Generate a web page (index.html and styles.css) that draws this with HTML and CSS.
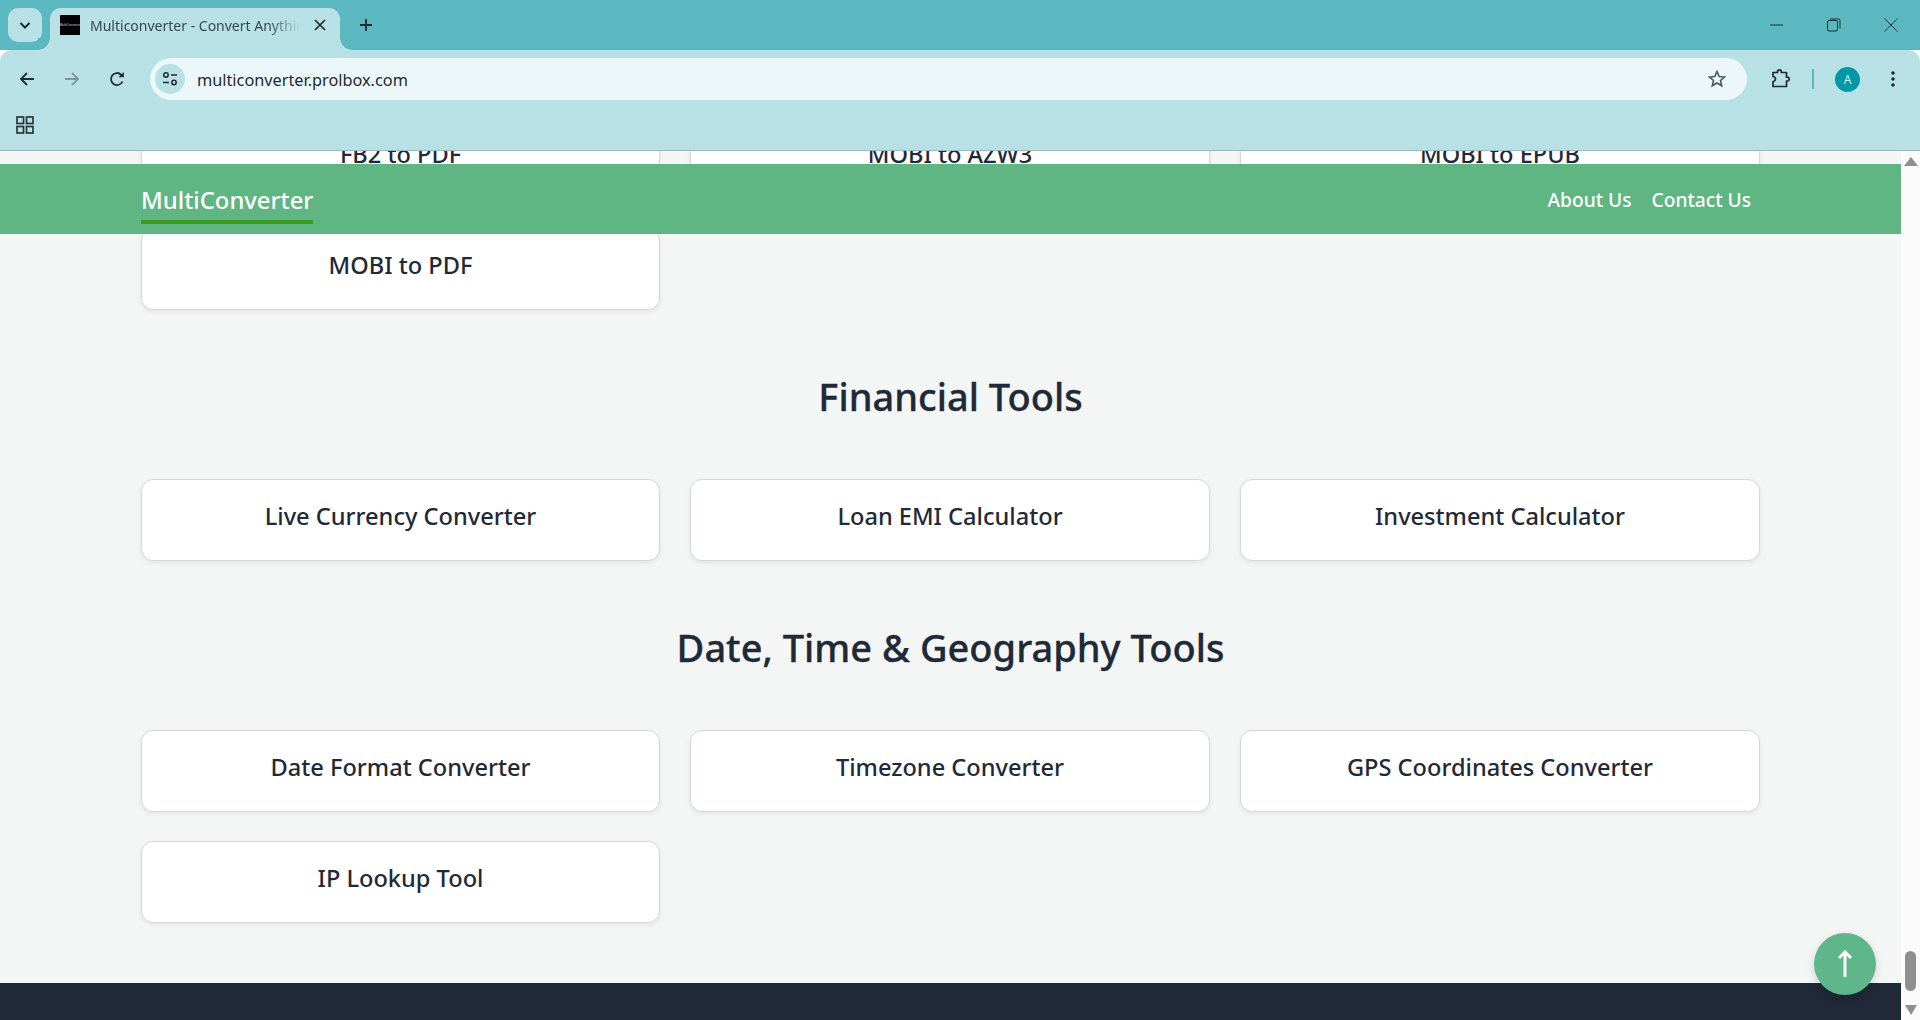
FILE: index.html
```html
<!DOCTYPE html>
<html lang="en">
<head>
  <meta charset="UTF-8">
  <title>Multiconverter - Convert Anything</title>
  <link rel="stylesheet" href="styles.css">
</head>
<body>
<div class="window">

  <div class="tabstrip">
    <button class="tab-search">
      <svg width="14" height="14" viewBox="0 0 14 14"><path d="M2.5 5 7 9.5 11.5 5" fill="none" stroke="#1f2a30" stroke-width="2"/></svg>
    </button>
    <div class="tab">
      <span class="favicon"><span class="favicon-text">MultiConverter</span></span>
      <span class="tab-title">Multiconverter - Convert Anything</span>
      <svg class="tab-close" width="12" height="12" viewBox="0 0 12 12"><path d="M1 1 11 11M11 1 1 11" stroke="#1f2a30" stroke-width="1.7"/></svg>
    </div>
    <svg class="new-tab" width="14" height="14" viewBox="0 0 14 14"><path d="M7 1V13M1 7H13" stroke="#1f2a30" stroke-width="1.8"/></svg>
    <div class="win-controls">
      <svg width="14" height="14" viewBox="0 0 14 14"><path d="M0 7H13" stroke="#1f2a30" stroke-width="1"/></svg>
      <svg width="14" height="14" viewBox="0 0 14 14"><rect x=".5" y="2.5" width="10" height="10.5" rx="1.5" fill="none" stroke="#1f2a30"/><path d="M3 1H11.5A1.5 1.5 0 0 1 13 2.5V10.5" fill="none" stroke="#1f2a30"/></svg>
      <svg width="14" height="14" viewBox="0 0 14 14"><path d="M.5 .5 13.500 13.500M13.500 .5 .5 13.500" stroke="#1f2a30" stroke-width="1"/></svg>
    </div>
  </div>

  <div class="toolbar">
    <div class="nav-icons">
      <svg width="18" height="18" viewBox="0 0 18 18"><path d="M16 9H3M9 3 3 9 9 15" fill="none" stroke="#1f2a30" stroke-width="1.8"/></svg>
      <svg width="18" height="18" viewBox="0 0 18 18"><path d="M2 9H15M9 3 15 9 9 15" fill="none" stroke="#7f9498" stroke-width="1.8"/></svg>
      <svg width="18" height="18" viewBox="0 0 18 18"><path d="M14.500 11.500A6 6 0 1 1 13.300 4.800L15 6.500" fill="none" stroke="#1f2a30" stroke-width="1.800"/><path d="M15.800 2V7.300H10.500Z" fill="#1f2a30"/></svg>
    </div>
    <div class="omnibox">
      <span class="site-info">
        <svg width="16" height="16" viewBox="0 0 16 16"><circle cx="4" cy="4" r="2.200" fill="none" stroke="#1f2a30" stroke-width="1.500"/><path d="M9 4H15M1 11.500H7" stroke="#1f2a30" stroke-width="1.500"/><circle cx="12" cy="11.500" r="2.200" fill="none" stroke="#1f2a30" stroke-width="1.500"/></svg>
      </span>
      <span class="url">multiconverter.prolbox.com</span>
      <svg class="star" width="20" height="20" viewBox="0 0 20 20"><path d="M10 2.500 12.200 7.500 17.500 8 13.500 11.500 14.700 16.800 10 14 5.300 16.800 6.500 11.500 2.500 8 7.800 7.500Z" fill="none" stroke="#4a5a60" stroke-width="1.600"/></svg>
    </div>
    <div class="toolbar-right">
      <svg width="20" height="20" viewBox="0 0 20 20"><path d="M3 3.500H7.500V2.800A1.900 1.900 0 0 1 11.300 2.800V3.500H16.500V8.200H17.300A1.900 1.900 0 0 1 17.300 12H16.500V17.500H3V12.500A2.500 2.500 0 0 0 3 7.500Z" fill="none" stroke="#1f2a30" stroke-width="1.700" stroke-linejoin="round"/></svg>
      <span class="toolbar-divider"></span>
      <span class="avatar">A</span>
      <svg width="4" height="18" viewBox="0 0 4 18"><circle cx="2" cy="3" r="1.800" fill="#1f2a30"/><circle cx="2" cy="9" r="1.800" fill="#1f2a30"/><circle cx="2" cy="15" r="1.800" fill="#1f2a30"/></svg>
    </div>
  </div>

  <div class="bookmarks">
    <svg width="18" height="18" viewBox="0 0 18 18"><g fill="none" stroke="#2a3438" stroke-width="1.700"><rect x="1" y="1" width="6.500" height="6.500"/><rect x="10.500" y="1" width="6.500" height="6.500"/><rect x="1" y="10.500" width="6.500" height="6.500"/><rect x="10.500" y="10.500" width="6.500" height="6.500"/></g></svg>
  </div>

  <div class="viewport">
    <div class="page">
      <main class="content">
        <section class="tool-section">
          <div class="tool-grid">
            <a class="tool-card">FB2 to PDF</a>
            <a class="tool-card">MOBI to AZW3</a>
            <a class="tool-card">MOBI to EPUB</a>
            <a class="tool-card">MOBI to PDF</a>
          </div>
        </section>
        <section class="tool-section">
          <h2>Financial Tools</h2>
          <div class="tool-grid">
            <a class="tool-card">Live Currency Converter</a>
            <a class="tool-card">Loan EMI Calculator</a>
            <a class="tool-card">Investment Calculator</a>
          </div>
        </section>
        <section class="tool-section">
          <h2>Date, Time &amp; Geography Tools</h2>
          <div class="tool-grid">
            <a class="tool-card">Date Format Converter</a>
            <a class="tool-card">Timezone Converter</a>
            <a class="tool-card">GPS Coordinates Converter</a>
            <a class="tool-card">IP Lookup Tool</a>
          </div>
        </section>
      </main>
      <footer class="site-footer"></footer>

      <nav class="navbar">
        <a class="brand">MultiConverter</a>
        <div class="nav-links">
          <a>About Us</a>
          <a>Contact Us</a>
        </div>
      </nav>

      <button class="to-top">
        <svg width="14" height="28" viewBox="0 0 14 28"><path d="M7 27V2M1 8 7 2 13 8" fill="none" stroke="#fff" stroke-width="3"/></svg>
      </button>
    </div>

    <div class="scrollbar">
      <span class="arrow-up"></span>
      <span class="thumb"></span>
      <span class="arrow-down"></span>
    </div>
  </div>

</div>
</body>
</html>
```

FILE: styles.css
```css
* { box-sizing: border-box; }
html, body { margin: 0; height: 100%; overflow: hidden; }
body { font-family: "Noto Sans", "Open Sans", sans-serif; color: #1f2937; }
a { color: inherit; text-decoration: none; }
button { border: none; padding: 0; cursor: pointer; }

.window { display: flex; flex-direction: column; height: 1020px; }

/* browser frame */
.tabstrip {
  display: flex;
  align-items: flex-end;
  height: 50px;
  flex-shrink: 0;
  background: #5bb8c1;
}
.tab-search {
  display: flex;
  align-items: center;
  justify-content: center;
  width: 34px;
  height: 34px;
  margin: 0 8px 8px;
  border-radius: 10px;
  background: #b7e1e5;
}
.tab {
  position: relative;
  display: flex;
  align-items: center;
  width: 290px;
  height: 42px;
  padding: 0 14px 8px 10px;
  border-radius: 11px 11px 0 0;
  background: #b7e1e5;
}
.tab::before, .tab::after {
  content: "";
  position: absolute;
  bottom: 0;
  width: 12px;
  height: 12px;
}
.tab::before { left: -12px; background: radial-gradient(circle at 0 0, #5bb8c1 11.5px, #b7e1e5 12px); }
.tab::after { right: -12px; background: radial-gradient(circle at 100% 0, #5bb8c1 11.5px, #b7e1e5 12px); }
.favicon {
  display: flex;
  align-items: center;
  justify-content: center;
  width: 20px;
  height: 20px;
  flex-shrink: 0;
  overflow: hidden;
  background: #000;
}
.favicon-text { font-size: 3px; color: #ddd; white-space: nowrap; }
.tab-title {
  width: 210px;
  margin: 0 14px 0 10px;
  overflow: hidden;
  white-space: nowrap;
  font-size: 14px;
  color: #37474c;
  -webkit-mask-image: linear-gradient(to right, #000 85%, transparent 100%);
  mask-image: linear-gradient(to right, #000 85%, transparent 100%);
}
.tab-close { flex-shrink: 0; }
.new-tab { margin: 0 0 18px 19px; }
.win-controls {
  display: flex;
  gap: 43px;
  margin: 0 22px 18px auto;
}

.toolbar {
  display: flex;
  align-items: center;
  height: 50px;
  flex-shrink: 0;
  padding: 8px 0 0 18px;
  background: #b7e1e5;
  border-radius: 12px 12px 0 0;
}
.nav-icons { display: flex; gap: 27px; width: 132px; flex-shrink: 0; }
.omnibox {
  display: flex;
  align-items: center;
  width: 1597px;
  height: 42px;
  flex-shrink: 0;
  padding: 0 20px 0 5px;
  border-radius: 21px;
  background: #ebf7f8;
}
.site-info {
  display: flex;
  align-items: center;
  justify-content: center;
  width: 30px;
  height: 30px;
  border-radius: 50%;
  background: #b7e1e5;
}
.url { margin-left: 12px; padding-top: 1px; font-size: 16.3px; color: #1f2a30; }
.star { margin-left: auto; }
.toolbar-right { display: flex; align-items: center; margin-left: 23px; }
.toolbar-divider { width: 2px; height: 20px; margin: 0 21px 0 22px; background: #5bb8c1; }
.avatar {
  display: flex;
  align-items: center;
  justify-content: center;
  width: 25px;
  height: 25px;
  margin-right: 31px;
  border-radius: 50%;
  background: #0097a7;
  color: #d8f3f5;
  font-size: 12px;
}

.bookmarks {
  display: flex;
  align-items: center;
  height: 51px;
  flex-shrink: 0;
  padding: 0 0 0 16px;
  background: #b7e1e5;
  border-bottom: 1px solid #9cb9c0;
}

/* page */
.viewport { display: flex; flex: 1; min-height: 0; }
.page {
  position: relative;
  flex: 1;
  overflow: hidden;
  background: #f4f6f6;
}
.content { width: 1619px; margin: -34px 0 0 141px; }
.tool-section h2 {
  margin: 0;
  padding-top: 59px;
  height: 169px;
  text-align: center;
  font-size: 38px;
  line-height: 54px;
  font-weight: 500;
  -webkit-text-stroke: 0.3px #1f2937;
}
.tool-grid {
  display: grid;
  grid-template-columns: 519px 520px 520px;
  gap: 29px 30px;
}
.tool-card {
  display: block;
  height: 82px;
  padding-top: 19px;
  text-align: center;
  font-size: 23.6px;
  line-height: 34px;
  font-weight: 500;
  background: #fff;
  border: 1px solid #d6d8da;
  border-radius: 12px;
  box-shadow: 0 2px 5px rgba(0, 0, 0, 0.07);
}
.site-footer {
  height: 60px;
  margin-top: 60px;
  background: #1f2937;
}

.navbar {
  position: absolute;
  top: 13px;
  left: 0;
  right: 0;
  display: flex;
  justify-content: space-between;
  height: 70px;
  padding: 0 150px 0 141px;
  background: #5fb682;
  color: #fff;
}
.brand {
  height: 60px;
  padding-top: 18px;
  line-height: 36px;
  font-size: 23.8px;
  font-weight: 500;
  border-bottom: 4px solid #3a9a1b;
}
.nav-links {
  display: flex;
  align-items: center;
  gap: 20px;
  padding-top: 1px;
  font-size: 19.2px;
  font-weight: 500;
}

.to-top {
  position: absolute;
  right: 25px;
  bottom: 25px;
  display: flex;
  align-items: center;
  justify-content: center;
  width: 62px;
  height: 62px;
  border-radius: 50%;
  background: #5fb68a;
  box-shadow: 0 3px 10px rgba(0, 0, 0, 0.15);
}

/* scrollbar */
.scrollbar {
  display: flex;
  flex-direction: column;
  align-items: center;
  width: 19px;
  padding: 6px 0 5px;
  background: #fbfbfb;
}
.arrow-up {
  width: 0;
  height: 0;
  border: 7px solid transparent;
  border-top: 0;
  border-bottom: 9px solid #8f8f8f;
}
.thumb {
  width: 11px;
  height: 40px;
  margin-top: auto;
  margin-bottom: 14px;
  border-radius: 6px;
  background: #8f8f8f;
}
.arrow-down {
  width: 0;
  height: 0;
  border: 6px solid transparent;
  border-bottom: 0;
  border-top: 10px solid #8f8f8f;
}
```
